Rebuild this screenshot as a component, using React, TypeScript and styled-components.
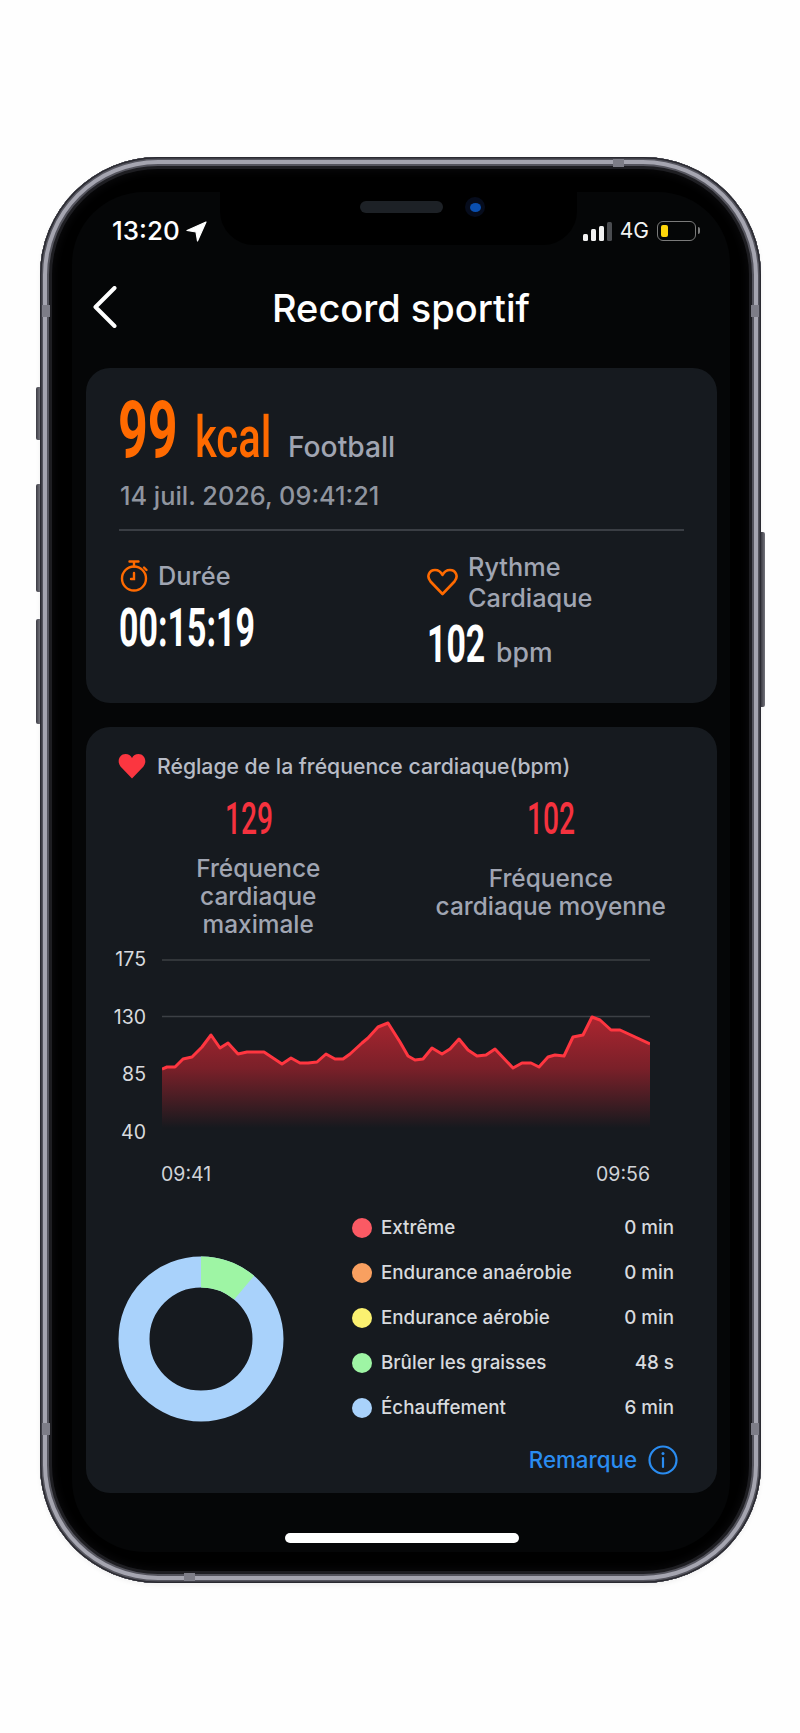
import styled, { createGlobalStyle } from "styled-components";

const GlobalStyle = createGlobalStyle`
	html, body {
		margin: 0;
		padding: 0;
		background: #fefefe;
	}
	* {
		box-sizing: border-box;
	}
`;

const linePoints = [
	[162, 1069], [167, 1067], [175, 1067], [183, 1059], [192, 1057], [202, 1047], [211, 1035], [220, 1048],
	[228, 1043], [238, 1054], [247, 1052], [264, 1052], [270, 1056], [282, 1064], [291, 1058], [300, 1063],
	[308, 1063], [317, 1062], [326, 1054], [335, 1059], [343, 1059], [350, 1054], [362, 1043], [368, 1038],
	[378, 1027], [388, 1023], [400, 1042], [408, 1056], [415, 1060], [423, 1059], [432, 1048], [442, 1054],
	[450, 1049], [459, 1039], [468, 1050], [477, 1056], [486, 1055], [495, 1049], [513, 1068], [522, 1063],
	[531, 1063], [539, 1067], [548, 1057], [555, 1055], [564, 1056], [573, 1037], [583, 1035], [592, 1017],
	[600, 1020], [611, 1030], [620, 1030], [650, 1044],
];

const toPlot = linePoints.map(([x, y]) => [x - 162, y - 950]);
const linePath = toPlot.map(([x, y]) => `${x},${y}`).join(" ");
const areaPath = `0,180 ${linePath} 488,180`;

const zones = [
	{ color: "#fb5a64", label: "Extrême", value: "0 min" },
	{ color: "#f9a060", label: "Endurance anaérobie", value: "0 min" },
	{ color: "#fbf170", label: "Endurance aérobie", value: "0 min" },
	{ color: "#9ef5a4", label: "Brûler les graisses", value: "48 s" },
	{ color: "#a9d2fb", label: "Échauffement", value: "6 min" },
];

function App() {
	return (
		<Page>
			<GlobalStyle />
			<Phone>
				<SideButton $side="left" $top={230} $height={53} />
				<SideButton $side="left" $top={327} $height={108} />
				<SideButton $side="left" $top={462} $height={105} />
				<SideButton $side="right" $top={375} $height={175} />
				<AntennaH $top={148} $side="left" />
				<AntennaH $top={148} $side="right" />
				<AntennaH $top={1266} $side="left" />
				<AntennaH $top={1266} $side="right" />
				<AntennaV $left={573} $edge="top" />
				<AntennaV $left={144} $edge="bottom" />
				<Screen>
					<Notch>
						<Speaker />
						<Camera>
							<CameraLens />
						</Camera>
					</Notch>
					<StatusBar>
						<StatusLeft>
							<Time>13:20</Time>
							<svg width="21" height="21" viewBox="0 0 21 21">
								<path d="M20 1 1 9.5l9 1.5 1.5 9z" fill="#fff" stroke="#fff" strokeWidth="1.2" strokeLinejoin="round" />
							</svg>
						</StatusLeft>
						<StatusRight>
							<SignalBars>
								<SignalBar $height={7} />
								<SignalBar $height={12} />
								<SignalBar $height={15} />
								<SignalBar $height={19} $dim />
							</SignalBars>
							<Network>4G</Network>
							<Battery>
								<BatteryFill />
							</Battery>
						</StatusRight>
					</StatusBar>
					<Nav>
						<BackButton>
							<svg width="24" height="42" viewBox="0 0 24 42">
								<path d="M21.5 2 2.5 21l19 19" fill="none" stroke="#fff" strokeWidth="4" strokeLinecap="round" strokeLinejoin="round" />
							</svg>
						</BackButton>
						<Title>Record sportif</Title>
					</Nav>
					<Card $bottom={32}>
						<KcalRow>
							<BigNumber $size={80} $width={57} $scale={0.65} $color="#ff6a00" $left={-2}>99</BigNumber>
							<BigNumber $size={58} $width={76} $scale={0.72} $color="#ff6a00" $left={20} $weight={500}>kcal</BigNumber>
							<Sport>Football</Sport>
						</KcalRow>
						<DateText>14 juil. 2026, 09:41:21</DateText>
						<Divider />
						<SummaryGrid>
							<div>
								<DurationHead>
									<svg width="29" height="32" viewBox="0 0 29 32">
										<g fill="none" stroke="#ff6a00" strokeWidth="2.4" strokeLinecap="round">
											<circle cx="14" cy="18.5" r="12" />
											<path d="M9.5 1.5h9M14 2v4.5M24 7.5l2.500 2.500M14 13v6h-3" />
										</g>
									</svg>
									<Label>Durée</Label>
								</DurationHead>
								<BigNumber $size={53} $width={134} $scale={0.64} $color="#fff" $left={-1}>00:15:19</BigNumber>
							</div>
							<div>
								<HeartHead>
									<svg width="31" height="28" viewBox="0 0 31 28">
										<path d="M15.5 26 3.5 13.5C-1 8 2.5 2 8 2c3.500 0 6 2 7.500 5C17 4 19.500 2 23 2c5.500 0 9 6 4.500 11.500z" fill="none" stroke="#ff6a00" strokeWidth="2.6" strokeLinejoin="round" />
									</svg>
									<Label>Rythme<br />Cardiaque</Label>
								</HeartHead>
								<BpmRow>
									<BigNumber $size={52} $width={57} $scale={0.65} $color="#fff">102</BigNumber>
									<BpmUnit>bpm</BpmUnit>
								</BpmRow>
							</div>
						</SummaryGrid>
					</Card>
					<Card $gap $bottom={18}>
						<ChartHead>
							<svg width="28" height="26" viewBox="0 0 28 26">
								<path d="M14 25.500 2.500 13.500C-1.500 8 1.500 1 7.500 1c3 0 5.200 1.600 6.500 4 1.300-2.400 3.500-4 6.500-4 6 0 9 7 5 12.500z" fill="#fb3640" />
							</svg>
							<ChartTitle>Réglage de la fréquence cardiaque(bpm)</ChartTitle>
						</ChartHead>
						<StatGrid>
							<StatColumn>
								<BigNumber $size={44} $width={47} $scale={0.64} $color="#f5323e" $weight={500} $left={-20}>129</BigNumber>
								<StatLabel>Fréquence<br />cardiaque<br />maximale</StatLabel>
							</StatColumn>
							<StatColumn>
								<BigNumber $size={44} $width={48} $scale={0.64} $color="#f5323e" $weight={500}>102</BigNumber>
								<StatLabel $offset={10}>Fréquence<br />cardiaque moyenne</StatLabel>
							</StatColumn>
						</StatGrid>
						<ChartRow>
							<YAxis>
								<span>175</span>
								<span>130</span>
								<span>85</span>
								<span>40</span>
							</YAxis>
							<PlotFrame>
								<svg width="488" height="190" viewBox="0 0 488 190">
									<defs>
										<linearGradient id="hrFill" x1="0" y1="70" x2="0" y2="178" gradientUnits="userSpaceOnUse">
											<stop offset="0" stopColor="#a8252f" />
											<stop offset="0.45" stopColor="#7a2029" />
											<stop offset="0.8" stopColor="#3a1c22" />
											<stop offset="1" stopColor="#16191e" />
										</linearGradient>
									</defs>
									<line x1="0" y1="10" x2="488" y2="10" stroke="#3c4045" strokeWidth="1.6" />
									<line x1="0" y1="66.500" x2="488" y2="66.500" stroke="#3c4045" strokeWidth="1.6" />
									<polygon points={areaPath} fill="url(#hrFill)" />
									<polyline points={linePath} fill="none" stroke="#ff3640" strokeWidth="3" strokeLinejoin="round" />
								</svg>
							</PlotFrame>
						</ChartRow>
						<TimeRow>
							<span>09:41</span>
							<span>09:56</span>
						</TimeRow>
						<ZoneRow>
							<DonutFrame>
								<svg width="166" height="166" viewBox="0 0 166 166">
									<circle cx="83" cy="83" r="67" fill="none" stroke="#a9d2fb" strokeWidth="31" />
									<circle cx="83" cy="83" r="67" fill="none" stroke="#9ef5a4" strokeWidth="31" strokeDasharray="46.800 374" transform="rotate(-90 83 83)" />
								</svg>
							</DonutFrame>
							<ZoneList>
								{zones.map((zone) => (
									<ZoneItem key={zone.label}>
										<ZoneDot $color={zone.color} />
										<ZoneName>{zone.label}</ZoneName>
										<span>{zone.value}</span>
									</ZoneItem>
								))}
							</ZoneList>
						</ZoneRow>
						<NoteRow>
							<Note>Remarque</Note>
							<svg width="30" height="30" viewBox="0 0 30 30">
								<circle cx="15" cy="15" r="13.500" fill="none" stroke="#2a8cf0" strokeWidth="2.2" />
								<path d="M15 13v9" stroke="#2a8cf0" strokeWidth="2.2" strokeLinecap="round" />
								<circle cx="15" cy="8.500" r="1.500" fill="#2a8cf0" />
							</svg>
						</NoteRow>
					</Card>
					<HomeBar />
				</Screen>
			</Phone>
		</Page>
	);
}

export default App;

const Page = styled.div`
	width: 800px;
	height: 1733px;
	padding: 157px 0 0 40px;
	background: #fefefe;
	overflow: hidden;
`;

const Phone = styled.div`
	position: relative;
	width: 721px;
	height: 1426px;
	padding: 35px 31px 31px 32px;
	border-radius: 118px;
	background: #000;
	box-shadow:
		inset 0 0 0 1.5px #2a2a31,
		inset 0 0 0 3px #55555e,
		inset 0 0 0 7px #a5a5b0,
		inset 0 0 0 9px #55555e,
		inset 0 0 0 12px #1e1e22,
		inset 0 0 8px 14px #0a0a0c,
		0 2px 5px rgba(0, 0, 0, 0.06);
`;

const SideButton = styled.div<{ $side: "left" | "right"; $top: number; $height: number }>`
	position: absolute;
	top: ${(props) => props.$top}px;
	${(props) => props.$side}: -4px;
	width: 4px;
	height: ${(props) => props.$height}px;
	background: linear-gradient(90deg, #3c3c44, #74747c);
	border-radius: ${(props) => (props.$side === "left" ? "2px 0 0 2px" : "0 2px 2px 0")};
`;

const AntennaH = styled.div<{ $top: number; $side: "left" | "right" }>`
	position: absolute;
	top: ${(props) => props.$top}px;
	${(props) => props.$side}: 2px;
	width: 8px;
	height: 12px;
	background: #7d7d87;
`;

const AntennaV = styled.div<{ $left: number; $edge: "top" | "bottom" }>`
	position: absolute;
	left: ${(props) => props.$left}px;
	${(props) => props.$edge}: 2px;
	width: 11px;
	height: 8px;
	background: #7d7d87;
`;

const Screen = styled.div`
	position: relative;
	width: 658px;
	height: 1360px;
	border-radius: 72px;
	background: #050607;
	display: flex;
	flex-direction: column;
	font-family: Inter, "Liberation Sans", sans-serif;
`;

const Notch = styled.div`
	position: absolute;
	top: 0;
	left: 148px;
	width: 357px;
	height: 53px;
	background: #000;
	border-radius: 0 0 34px 34px;
`;

const Speaker = styled.div`
	position: absolute;
	top: 9px;
	left: 140px;
	width: 83px;
	height: 12px;
	border-radius: 6px;
	background: #1d2126;
`;

const Camera = styled.div`
	position: absolute;
	top: 5px;
	left: 245px;
	width: 20px;
	height: 20px;
	border-radius: 50%;
	background: #060c1c;
	display: flex;
	align-items: center;
	justify-content: center;
`;

const CameraLens = styled.div`
	width: 11px;
	height: 9px;
	border-radius: 50%;
	background: #0a4fb0;
`;

const StatusBar = styled.div`
	position: relative;
	display: flex;
	justify-content: space-between;
	align-items: center;
	height: 53px;
	padding: 25px 34px 0 40px;
`;

const StatusLeft = styled.div`
	display: flex;
	align-items: center;
	gap: 6px;
`;

const Time = styled.div`
	font-size: 26px;
	font-weight: 500;
	line-height: 28px;
	color: #fff;
`;

const StatusRight = styled.div`
	display: flex;
	align-items: center;
`;

const SignalBars = styled.div`
	display: flex;
	align-items: flex-end;
	gap: 3px;
	height: 19px;
`;

const SignalBar = styled.div<{ $height: number; $dim?: boolean }>`
	width: 5px;
	height: ${(props) => props.$height}px;
	border-radius: 1.5px;
	background: ${(props) => (props.$dim ? "#4a4c50" : "#f2f2f2")};
`;

const Network = styled.div`
	margin: 0 8px;
	font-size: 21px;
	line-height: 24px;
	color: #f2f2f2;
`;

const Battery = styled.div`
	position: relative;
	width: 39px;
	height: 20px;
	padding: 3px;
	border: 1.5px solid #7a7a7a;
	border-radius: 6px;
	&::after {
		content: "";
		position: absolute;
		right: -5px;
		top: 5px;
		width: 2.5px;
		height: 7px;
		border-radius: 0 2px 2px 0;
		background: #7a7a7a;
	}
`;

const BatteryFill = styled.div`
	width: 7px;
	height: 100%;
	border-radius: 2px;
	background: #ffd60a;
`;

const Nav = styled.div`
	display: grid;
	grid-template-columns: 1fr auto 1fr;
	height: 123px;
	padding-top: 41px;
`;

const BackButton = styled.div`
	padding-left: 21px;
`;

const Title = styled.div`
	font-size: 38px;
	font-weight: 500;
	line-height: 44px;
	color: #fff;
`;

const Card = styled.div<{ $gap?: boolean; $bottom: number }>`
	margin: ${(props) => (props.$gap ? "24px" : "0")} 13px 0 14px;
	padding: 22px 34px ${(props) => props.$bottom}px;
	border-radius: 24px;
	background: #161a1f;
`;

const BigNumber = styled.span<{
	$size: number;
	$width: number;
	$scale: number;
	$color: string;
	$left?: number;
	$weight?: number;
}>`
	display: inline-block;
	width: ${(props) => props.$width}px;
	margin-left: ${(props) => props.$left || 0}px;
	font-family: Roboto, "Liberation Sans", sans-serif;
	font-size: ${(props) => props.$size}px;
	font-weight: ${(props) => props.$weight || 700};
	line-height: 1;
	color: ${(props) => props.$color};
	white-space: nowrap;
	transform: scaleX(${(props) => props.$scale});
	transform-origin: left;
`;

const KcalRow = styled.div`
	display: flex;
	align-items: baseline;
`;

const Sport = styled.span`
	margin-left: 17px;
	font-size: 28.2px;
	font-weight: 500;
	color: #a0a5b2;
`;

const DateText = styled.div`
	margin-top: 10px;
	font-size: 25.3px;
	font-weight: 500;
	line-height: 32px;
	color: #90959f;
`;

const Divider = styled.div`
	height: 2px;
	margin: 17px -1px 0;
	background: #3a3e44;
`;

const SummaryGrid = styled.div`
	display: grid;
	grid-template-columns: 307px 1fr;
	padding-top: 20px;
`;

const DurationHead = styled.div`
	display: flex;
	align-items: center;
	gap: 9px;
	height: 41px;
	margin-top: 4px;
	margin-bottom: 6px;
`;

const HeartHead = styled.div`
	display: flex;
	align-items: center;
	gap: 10px;
	margin-bottom: 6px;
`;

const Label = styled.div`
	font-size: 25.3px;
	font-weight: 500;
	line-height: 31px;
	color: #a0a5b2;
`;

const BpmRow = styled.div`
	display: flex;
	align-items: baseline;
`;

const BpmUnit = styled.span`
	margin-left: 12px;
	font-size: 26.6px;
	font-weight: 500;
	color: #a0a5b2;
`;

const ChartHead = styled.div`
	display: flex;
	align-items: center;
	gap: 11px;
	margin: 3px 0 0 -2px;
`;

const ChartTitle = styled.div`
	font-size: 21.2px;
	font-weight: 500;
	line-height: 28px;
	color: #b8bcc6;
`;

const StatGrid = styled.div`
	display: grid;
	grid-template-columns: 1fr 1fr;
	margin: 17px -14px 0 -8px;
`;

const StatColumn = styled.div`
	display: flex;
	flex-direction: column;
	align-items: center;
`;

const StatLabel = styled.div<{ $offset?: number }>`
	margin-top: ${(props) => 13 + (props.$offset || 0)}px;
	font-size: 24.4px;
	font-weight: 500;
	line-height: 28px;
	text-align: center;
	color: #a0a5b2;
`;

const ChartRow = styled.div`
	display: flex;
	margin: 9px 0 0 -20px;
`;

const YAxis = styled.div`
	display: flex;
	flex-direction: column;
	justify-content: space-between;
	width: 46px;
	height: 197px;
	margin-right: 16px;
	font-size: 19.5px;
	line-height: 24px;
	text-align: right;
	color: #d8dade;
`;

const PlotFrame = styled.div`
	height: 190px;
	margin-top: 3px;
	line-height: 0;
`;

const TimeRow = styled.div`
	display: flex;
	justify-content: space-between;
	width: 489px;
	margin: 18px 0 0 41px;
	font-size: 19.5px;
	line-height: 24px;
	color: #d0d3d8;
`;

const ZoneRow = styled.div`
	display: flex;
	align-items: flex-start;
	margin: 30px 0 0 -2px;
`;

const DonutFrame = styled.div`
	height: 166px;
	margin-top: 40px;
	line-height: 0;
`;

const ZoneList = styled.div`
	display: flex;
	flex-direction: column;
	gap: 21px;
	width: 322px;
	margin-left: 68px;
`;

const ZoneItem = styled.div`
	display: flex;
	align-items: center;
	font-size: 18.8px;
	font-weight: 500;
	line-height: 24px;
	color: #d8dade;
`;

const ZoneDot = styled.div<{ $color: string }>`
	width: 20px;
	height: 20px;
	margin-right: 9px;
	border-radius: 50%;
	background: ${(props) => props.$color};
`;

const ZoneName = styled.span`
	flex: 1;
`;

const NoteRow = styled.div`
	display: flex;
	align-items: center;
	justify-content: flex-end;
	gap: 11px;
	margin: 23px 5px 0 0;
`;

const Note = styled.span`
	font-size: 22.3px;
	font-weight: 500;
	line-height: 30px;
	color: #2a8cf0;
`;

const HomeBar = styled.div`
	position: absolute;
	left: 213px;
	bottom: 9px;
	width: 234px;
	height: 10px;
	border-radius: 5px;
	background: #fff;
`;
